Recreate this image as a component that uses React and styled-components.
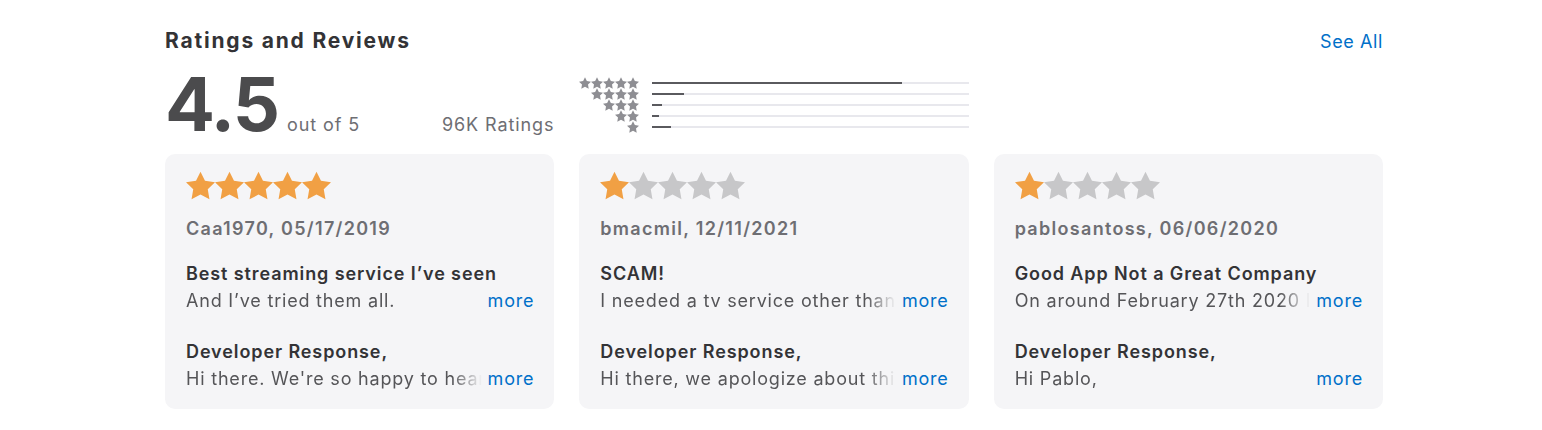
import styled, { createGlobalStyle } from "styled-components";

const GlobalStyle = createGlobalStyle`
  body {
    margin: 0;
    background: #ffffff;
    font-family: Inter, "Liberation Sans", sans-serif;
    -webkit-font-smoothing: antialiased;
  }
`;

const Section = styled.section`
  width: 1218px;
  margin-left: 165px;
  padding-top: 27px;
`;

const Header = styled.div`
  display: flex;
  justify-content: space-between;
  align-items: baseline;
`;

const Title = styled.h2`
  margin: 0;
  font-size: 21px;
  line-height: 28px;
  font-weight: 700;
  color: #333336;
  letter-spacing: 1.8px;
`;

const SeeAll = styled.a`
  font-size: 18px;
  letter-spacing: 0.6px;
  color: #0070c9;
  text-decoration: none;
`;

const Grid = styled.div`
  display: grid;
  grid-template-columns: repeat(3, minmax(0, 1fr));
  column-gap: 25px;
`;

const Summary = styled(Grid)`
  margin-top: 11px;
  height: 88px;
`;

const Score = styled.div`
  display: flex;
  align-items: baseline;
`;

const Average = styled.span`
  font-size: 74px;
  line-height: 76px;
  font-weight: 700;
  color: #4b4b4d;
  letter-spacing: -2px;
`;

const OutOf = styled.span`
  margin-left: 9px;
  font-size: 18px;
  letter-spacing: 0.9px;
  color: #6e6e73;
`;

const Count = styled.span`
  margin-left: auto;
  font-size: 18px;
  letter-spacing: 0.9px;
  color: #6e6e73;
`;

const Histogram = styled.div`
  display: flex;
  flex-direction: column;
  padding-top: 11px;
`;

const HistRow = styled.div`
  display: grid;
  grid-template-columns: 60px 1fr;
  column-gap: 13px;
  align-items: center;
  height: 11px;
`;

const MiniStars = styled.div`
  display: flex;
  justify-content: flex-end;
`;

const Track = styled.div`
  height: 2px;
  background: #e8e8ed;
`;

const Fill = styled.div`
  height: 100%;
  background: #5a5a5e;
`;

const Card = styled.article`
  height: 255px;
  box-sizing: border-box;
  padding: 17px 20px 0 21px;
  border-radius: 10px;
  background: #f5f5f7;
`;

const CardStars = styled.div`
  display: flex;
  height: 29px;
`;

const Author = styled.div`
  margin-top: 16px;
  font-size: 18px;
  line-height: 26px;
  font-weight: 600;
  letter-spacing: 1.3px;
  color: #6e6e73;
`;

const Heading = styled.div`
  margin-top: 18px;
  font-size: 18px;
  line-height: 27px;
  font-weight: 600;
  letter-spacing: 0.9px;
  color: #333336;
`;

const Line = styled.div`
  display: flex;
  align-items: baseline;
  font-size: 18px;
  line-height: 28px;
  letter-spacing: 0.8px;
  color: #555558;
`;

const Clamp = styled.span`
  flex: 1;
  min-width: 0;
  white-space: nowrap;
  overflow: hidden;
  -webkit-mask-image: linear-gradient(to left, transparent 0, transparent 6px, #000 36px);
  mask-image: linear-gradient(to left, transparent 0, transparent 6px, #000 36px);
`;

const More = styled.a`
  flex: none;
  color: #0070c9;
  text-decoration: none;
`;

const ResponseHeading = styled(Heading)`
  margin-top: 23px;
`;

const STAR = "M12 2l3.09 6.26L22 9.27l-5 4.87 1.18 6.88L12 17.77l-6.18 3.25L7 14.14 2 9.27l6.91-1.01L12 2z";

const Star = ({ size, color }) => (
  <svg width={size} height={size} viewBox="2 1.5 20 20" aria-hidden="true">
    <path d={STAR} fill={color} />
  </svg>
);

const histogram = [79, 10, 3, 2, 6];

const reviews = [
  {
    rating: 5,
    author: "Caa1970, 05/17/2019",
    title: "Best streaming service I’ve seen",
    body: "And I’ve tried them all.",
    response: "Hi there. We're so happy to hear that you love Hulu!",
  },
  {
    rating: 1,
    author: "bmacmil, 12/11/2021",
    title: "SCAM!",
    body: "I needed a tv service other than cable for my home",
    response: "Hi there, we apologize about this experience",
  },
  {
    rating: 1,
    author: "pablosantoss, 06/06/2020",
    title: "Good App Not a Great Company",
    body: "On around February 27th 2020 I signed up",
    response: "Hi Pablo,",
  },
];

const Review = ({ review }) => (
  <Card>
    <CardStars>
      {[0, 1, 2, 3, 4].map((i) => (
        <Star key={i} size={29} color={i < review.rating ? "#f1a044" : "#c7c7c9"} />
      ))}
    </CardStars>
    <Author>{review.author}</Author>
    <Heading>{review.title}</Heading>
    <Line>
      <Clamp>{review.body}</Clamp>
      <More href="#">more</More>
    </Line>
    <ResponseHeading>Developer Response,</ResponseHeading>
    <Line>
      <Clamp>{review.response}</Clamp>
      <More href="#">more</More>
    </Line>
  </Card>
);

export default function App() {
  return (
    <>
      <GlobalStyle />
      <Section>
        <Header>
          <Title>Ratings and Reviews</Title>
          <SeeAll href="#">See All</SeeAll>
        </Header>
        <Summary>
          <Score>
            <Average>4.5</Average>
            <OutOf>out of 5</OutOf>
            <Count>96K Ratings</Count>
          </Score>
          <Histogram>
            {histogram.map((pct, row) => (
              <HistRow key={row}>
                <MiniStars>
                  {Array.from({ length: 5 - row }).map((_, i) => (
                    <Star key={i} size={12} color="#8e8e93" />
                  ))}
                </MiniStars>
                <Track>
                  <Fill style={{ width: `${pct}%` }} />
                </Track>
              </HistRow>
            ))}
          </Histogram>
        </Summary>
        <Grid>
          {reviews.map((r) => (
            <Review key={r.author} review={r} />
          ))}
        </Grid>
      </Section>
    </>
  );
}
